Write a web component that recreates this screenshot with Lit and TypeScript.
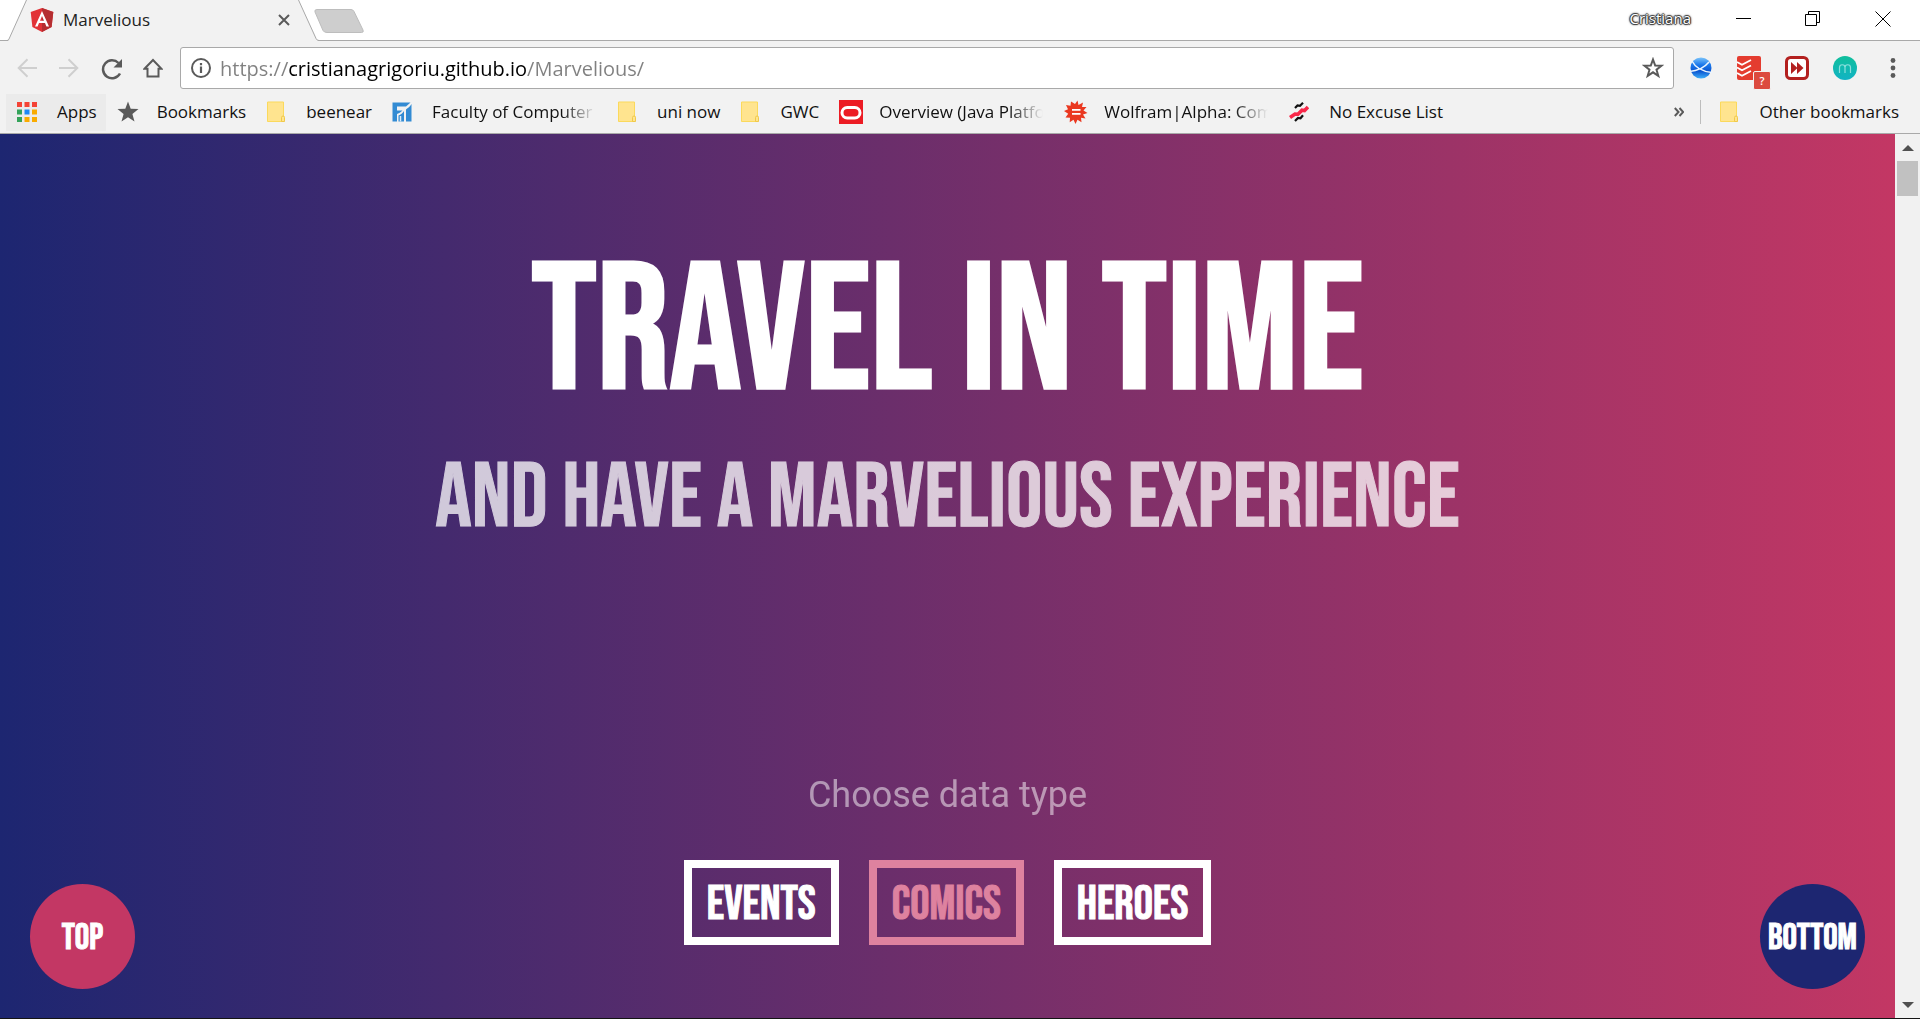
import { LitElement, html, css, svg, nothing } from "lit";
import { customElement, property, state } from "lit/decorators.js";
import { classMap } from "lit/directives/class-map.js";

const folder = svg`<svg viewBox="0 0 20 24" width="20" height="24" aria-hidden="true">
  <path d="M1.500 2h16v14.500h.5v5H1.500z" fill="#ffe48f" stroke="#fbd95c"/>
  <path d="M15.500 21.500v-4a1.500 1.500 0 0 1 3 0v4z" fill="#ffe48f" stroke="#f0c94a"/></svg>`;

const icons: Record<string, unknown> = {
  folder,
  apps: svg`<svg viewBox="0 0 20 20" width="20" height="20" aria-hidden="true">
    <path d="M0 0h5v5H0zM7.500 0h5v5h-5zM15 0h5v5h-5z" fill="#f44336"/>
    <path d="M0 7.500h5v5H0zM0 15h5v5H0z" fill="#34a35a"/>
    <path d="M7.500 7.500h5v5h-5z" fill="#1e88f5"/>
    <path d="M15 7.500h5v5h-5zM15 15h5v5h-5zM7.500 15h5v5h-5z" fill="#f9ab00"/></svg>`,
  star: svg`<svg viewBox="0 0 22 22" width="22" height="22" aria-hidden="true">
    <path d="M11 .5l2.700 7.200 7.800.3-6.100 4.900 2.100 7.600L11 16.200l-6.500 4.300 2.100-7.600L.5 8l7.800-.3z" fill="#5a5a5a"/></svg>`,
  faculty: svg`<svg viewBox="0 0 20 20" width="20" height="20" aria-hidden="true">
    <path d="M.5.5h18L14 4.500H5v4h5.500C9 10 7.500 11 5 12v7.500H.5z" fill="#338bd3"/>
    <path d="M12 9v10.500H6.500V13.500C9 12.500 10.500 11 12 9z" fill="#338bd3"/>
    <path d="M19.500 2v17.500H14V7.500C16 6 18 4.500 19.500 2z" fill="#338bd3"/>
    <path d="M8.500 14v5.500" stroke="#d9ecfb" stroke-width="1.500"/></svg>`,
  oracle: svg`<svg viewBox="0 0 24 24" width="24" height="24" aria-hidden="true">
    <path d="M0 0h24v24H0z" fill="#ec1c24"/>
    <rect x="3" y="7.500" width="18" height="10.500" rx="5.250" fill="none" stroke="#fff" stroke-width="3"/></svg>`,
  wolfram: svg`<svg viewBox="0 0 24 24" width="24" height="24" aria-hidden="true">
    <path d="M11 4L13.500 .5l1 4.500 4.500-2.500-1 4.500 4.500 0-3 3.500 4 2.500-4.500 1.500 2.500 4-4.500-.8.500 4.500-4-2.500-2 4.300-2-4.200-3.800 2.500.300-4.500-4.500-.3 2.700-3.700L0 11l4-1.700L2 5l4.500.8L7 1.500z" fill="#ea3820"/>
    <path d="M8 9.800h8.500M8 13.800h8.500" stroke="#fff" stroke-width="1.800"/></svg>`,
  excuse: svg`<svg viewBox="0 0 20 22" width="20" height="22" aria-hidden="true">
    <path d="M6 7l2.500-2.500 2.500.3 3-3" fill="none" stroke="#111" stroke-width="2.200"/>
    <path d="M1 16.500l5-3.500 3 .2 4-4 2.500.3 3.500-3.500" fill="none" stroke="#f9284a" stroke-width="3.600"/>
    <path d="M6 20l3-3 2.500.3 2.500-3" fill="none" stroke="#111" stroke-width="2.200"/></svg>`,
};

interface Bookmark {
  icon: string;
  label: string;
  cut?: boolean;
  hot?: boolean;
}

const bookmarks: Bookmark[] = [
  { icon: "apps", label: "Apps", hot: true },
  { icon: "star", label: "Bookmarks" },
  { icon: "folder", label: "beenear" },
  { icon: "faculty", label: "Faculty of Computer", cut: true },
  { icon: "folder", label: "uni now" },
  { icon: "folder", label: "GWC" },
  { icon: "oracle", label: "Overview (Java Platfo", cut: true },
  { icon: "wolfram", label: "Wolfram|Alpha: Com", cut: true },
  { icon: "excuse", label: "No Excuse List" },
];

@customElement("tab-strip")
export class TabStrip extends LitElement {
  static styles = css`
    :host { display: flex; height: 41px; background: #fff; box-shadow: inset 0 -1px #a9a9a9; font-size: 17px; color: #222; }
    button { border: 0; padding: 0; background: none; font: inherit; color: inherit; display: grid; place-items: center; }
    svg { display: block; }
    .tab { position: relative; width: 313px; box-sizing: border-box; padding: 0 23px 2px 30px; display: flex; align-items: center; gap: 9px; }
    .shape { position: absolute; left: 0; top: 0; }
    .tab > :not(.shape) { position: relative; }
    .title { flex: 1; }
    .new { align-self: flex-start; margin-top: 8px; }
    .user { margin-left: auto; align-self: center; padding-bottom: 6px; font-size: 15px; color: #fff; text-shadow: 0 0 1px #333, 1px 0 1px #333, -1px 0 1px #333, 0 1px 1px #333, 0 -1px 1px #333, 0 0 3px #555; }
    .win { width: 70px; height: 37px; }
    .caption { display: flex; margin: 0 2px 0 17px; }
  `;
  render() {
    return html`
      <div class="tab">
        <svg class="shape" viewBox="0 0 325 41" width="325" height="41" aria-hidden="true">
          <path d="M8 41L26.500 0h272L318 41z" fill="#f2f2f2"/>
          <path d="M0 40.500h7q1.500 0 2-1.500L26.500 0M298.500 0L316 38.500q1 2 3 2h6" fill="none" stroke="#a9a9a9"/>
        </svg>
        <svg viewBox="0 0 24 24" width="24" height="24" aria-hidden="true">
          <path d="M12 0l11.300 4-1.700 15L12 24l-9.600-5L.7 4z" fill="#e23237"/>
          <path d="M12 0l11.300 4-1.700 15L12 24z" fill="#b52e31"/>
          <path d="M12 3L5 18.500h2.600L9 15h6l1.400 3.500H19zm0 5l2 4.800h-4z" fill="#fff"/>
        </svg>
        <span class="title">Marvelious</span>
        <button class="close" aria-label="Close tab">
          <svg viewBox="0 0 12 12" width="12" height="12"><path d="M1 1l10 10M11 1L1 11" stroke="#5a5a5a" stroke-width="2"/></svg>
        </button>
      </div>
      <button class="new" aria-label="New tab">
        <svg viewBox="0 0 52 26" width="52" height="26"><path d="M4 1.500h34q2 0 3 2l9 18.500q1 2.500-1.500 2.500H14q-3 0-4-2L2 4q-.8-2.500 2-2.500z" fill="#cecece" stroke="#bdbdbd"/></svg>
      </button>
      <span class="user">Cristiana</span>
      <div class="caption">
        <button class="win" aria-label="Minimise"><svg viewBox="0 0 15 15" width="15" height="15"><path d="M0 7.500h15" stroke="#000"/></svg></button>
        <button class="win" aria-label="Restore"><svg viewBox="0 0 16 16" width="16" height="16"><path d="M.5 3.500h11v11H.5zM3.500 3.500v-3h11v11h-3" fill="none" stroke="#000"/></svg></button>
        <button class="win" aria-label="Close"><svg viewBox="0 0 16 16" width="16" height="16"><path d="M.5.5l15 15M15.500.5l-15 15" stroke="#000"/></svg></button>
      </div>
    `;
  }
}

@customElement("tool-bar")
export class ToolBar extends LitElement {
  static styles = css`
    :host { display: flex; align-items: center; padding: 6px 16px 2px 17px; }
    button { border: 0; padding: 0; background: none; font: inherit; display: grid; place-items: center; }
    svg { display: block; }
    .nav { display: flex; gap: 22px; }
    .nav button { width: 20px; height: 20px; }
    .address { flex: 1; display: flex; align-items: center; margin-left: 17px; height: 40px; border: 1px solid #a9a9a9; border-radius: 3px; background: #fff; padding: 0 9px 0 10px; }
    .url {
      flex: 1; min-width: 0; border: 0; outline: 0; padding: 0; margin: 0 9px; height: 36px;
      font: inherit; font-size: 20px; color: transparent;
      background: linear-gradient(90deg, #808080 68px, #000 68px, #000 306px, #808080 306px);
      -webkit-background-clip: text; background-clip: text;
    }
    .ext { display: flex; align-items: center; gap: 24px; margin-left: 15px; }
    .ext button { width: 24px; height: 24px; }
    .ext svg { overflow: visible; }
    .menu { margin-left: 31px; width: 10px; height: 24px; margin-right: 6px; }
    text { font-family: "Open Sans", sans-serif; text-anchor: middle; }
  `;
  render() {
    return html`
      <div class="nav">
        <button aria-label="Back"><svg viewBox="0 0 20 20" width="20" height="20"><path d="M20 10H2M10.500 1.200L1.700 10l8.800 8.800" fill="none" stroke="#cfcfcf" stroke-width="2"/></svg></button>
        <button aria-label="Forward"><svg viewBox="0 0 20 20" width="20" height="20"><path d="M0 10h18M9.500 1.200l8.800 8.800-8.800 8.800" fill="none" stroke="#cfcfcf" stroke-width="2"/></svg></button>
        <button aria-label="Reload"><svg viewBox="0 0 22 22" width="22" height="22"><path d="M19 15.500A9 9 0 1 1 17.500 5" fill="none" stroke="#5a5a5a" stroke-width="2.500"/><path d="M21 1v8.500h-8.500z" fill="#5a5a5a"/></svg></button>
        <button aria-label="Home"><svg viewBox="0 0 20 20" width="20" height="20"><path d="M1.500 10.800L10 2l8.500 8.800H15.500v7.700h-11v-7.700z" fill="none" stroke="#5a5a5a" stroke-width="2"/></svg></button>
      </div>
      <div class="address">
        <button aria-label="Site information"><svg viewBox="0 0 20 20" width="20" height="20"><circle cx="10" cy="10" r="9" fill="none" stroke="#5a5a5a" stroke-width="2"/><path d="M10 8.500v6.500M10 5v2.200" stroke="#5a5a5a" stroke-width="2.200"/></svg></button>
        <input class="url" type="text" aria-label="Address" spellcheck="false" .value=${"https://cristianagrigoriu.github.io/Marvelious/"}>
        <button aria-label="Bookmark this page"><svg viewBox="0 0 22 22" width="22" height="22"><path d="M11 2.500l2.200 6 6.300.2-5 4 1.800 6.100L11 15.300l-5.300 3.500 1.800-6.100-5-4 6.300-.2z" fill="none" stroke="#5a5a5a" stroke-width="2"/></svg></button>
      </div>
      <div class="ext">
        <button aria-label="Globe extension"><svg viewBox="0 0 24 24" width="24" height="24">
          <defs><linearGradient id="globe" x2="0" y2="1"><stop offset="0" stop-color="#7cc4fa"/><stop offset=".35" stop-color="#1a78ec"/><stop offset=".65" stop-color="#0a55d0"/><stop offset="1" stop-color="#3fb0fa"/></linearGradient></defs>
          <circle cx="12" cy="12" r="10.500" fill="url(#globe)"/>
          <path d="M3 5c3 6 10 10.500 20 11.500M.5 15.500c8-.5 15-4 19.500-9.500" fill="none" stroke="#eaf5ff" stroke-width="1.500"/></svg></button>
        <button aria-label="Tasks extension"><svg viewBox="0 0 24 24" width="24" height="24">
          <rect width="24" height="24" rx="2" fill="#e43c2f"/>
          <path d="M0 6l5 2.800L14 4M0 11.500l5 2.800 9-4.800M0 17l5 2.800 9-4.800" fill="none" stroke="#fff" stroke-width="1.800"/>
          <rect x="16.500" y="15.500" width="17" height="18" rx="1.500" fill="#dc4a3f" stroke="#f2f2f2"/>
          <text x="25" y="29" font-size="11" font-weight="600" fill="#fff">?</text></svg></button>
        <button aria-label="Playback extension"><svg viewBox="0 0 24 24" width="24" height="24">
          <rect x="1.500" y="1.500" width="21" height="21" rx="4" fill="#fff" stroke="#b3201f" stroke-width="3"/>
          <path d="M6 6l6.500 6L6 18zM12 6l6.500 6L12 18z" fill="#b3201f"/></svg></button>
        <button aria-label="Profile extension"><svg viewBox="0 0 24 24" width="24" height="24">
          <defs><linearGradient id="mint" x2="0" y2="1"><stop offset="0" stop-color="#10bf9c"/><stop offset="1" stop-color="#12b3c4"/></linearGradient></defs>
          <circle cx="12" cy="12" r="12" fill="url(#mint)"/>
          <path d="M6.500 17v-5.500a2.750 2.750 0 0 1 5.500 0V17M12 11.500a2.750 2.750 0 0 1 5.500 0V17" fill="none" stroke="#8be0dc" stroke-width="1.200"/></svg></button>
      </div>
      <button class="menu" aria-label="Menu"><svg viewBox="0 0 6 22" width="6" height="22"><circle cx="3" cy="3.500" r="2.400" fill="#5a5a5a"/><circle cx="3" cy="11" r="2.400" fill="#5a5a5a"/><circle cx="3" cy="18.500" r="2.400" fill="#5a5a5a"/></svg></button>
    `;
  }
}

@customElement("bookmark-bar")
export class BookmarkBar extends LitElement {
  static styles = css`
    :host { display: flex; align-items: center; height: 42px; padding: 0 12px 0 6px; border-bottom: 1px solid #a9a9a9; font-size: 17px; color: #111; }
    a { display: flex; align-items: center; gap: 20px; height: 37px; padding: 0 9px 0 11px; color: inherit; text-decoration: none; white-space: nowrap; }
    .hot { background: #ebebeb; }
    .icon { width: 20px; display: grid; place-items: center; }
    .icon svg { display: block; }
    .label { padding-bottom: 2px; }
    .cut { width: 165px; -webkit-mask-image: linear-gradient(90deg, #000 130px, transparent 164px); mask-image: linear-gradient(90deg, #000 130px, transparent 164px); }
    button { margin: 0 16px 0 auto; border: 0; padding: 0; background: none; }
    .rule { width: 1px; height: 24px; background: #bdbdbd; margin-right: 7px; }
  `;
  private item(b: Bookmark) {
    return html`<a href="#" class=${b.hot ? "hot" : nothing}>
      <span class="icon">${icons[b.icon]}</span><span class=${classMap({ label: true, cut: !!b.cut })}>${b.label}</span></a>`;
  }
  render() {
    return html`
      ${bookmarks.map((b) => this.item(b))}
      <button aria-label="More bookmarks"><svg viewBox="0 0 10 10" width="10" height="10"><path d="M.8 1l3.700 4L.8 9M5.500 1l3.700 4-3.700 4" fill="none" stroke="#5a5a5a" stroke-width="2"/></svg></button>
      <span class="rule"></span>
      ${this.item({ icon: "folder", label: "Other bookmarks" })}
    `;
  }
}

@customElement("time-travel")
export class TimeTravel extends LitElement {
  static styles = css`
    :host { position: relative; display: flex; flex-direction: column; align-items: center; background: linear-gradient(90deg, #1d2671, #c33764); color: #fff; overflow: hidden; }
    h1, h2, p { margin: 0; white-space: nowrap; }
    h1, h2, button { font-family: "Bebas Neue", "Liberation Sans Narrow", "Roboto Condensed", "Liberation Sans", sans-serif; font-weight: 400; text-transform: uppercase; -webkit-text-stroke: 1px currentColor; }
    h1 { margin-top: 120px; font-size: 180px; line-height: 160px; -webkit-text-stroke-width: 3px; }
    h2 { margin-top: 45px; font-size: 91px; line-height: 80px; opacity: 0.75; }
    p { margin-top: 236px; font-family: Roboto, sans-serif; font-size: 36px; line-height: 40px; opacity: 0.5; }
    .types { display: flex; gap: 30px; margin-top: 45px; }
    .type { height: 85px; padding: 4px 15px 0; border: 8px solid #fff; background: none; color: #fff; font-size: 48px; }
    .picked { color: #de829f; border-color: #de829f; }
    .jump { position: absolute; bottom: 29px; width: 105px; height: 105px; border: 0; border-radius: 50%; padding: 4px 0 0; color: #fff; font-size: 36px; }
    .top { left: 30px; background: #c33764; }
    .bottom { right: 30px; background: #1d2671; }
  `;
  @property({ type: Array }) types = ["Events", "Comics", "Heroes"];
  @state() private picked = "Comics";
  render() {
    return html`
      <h1>Travel in time</h1>
      <h2>and have a marvelious experience</h2>
      <p>Choose data type</p>
      <div class="types">
        ${this.types.map((t) => html`<button class=${classMap({ type: true, picked: t === this.picked })} @click=${() => (this.picked = t)}>${t}</button>`)}
      </div>
      <button class="jump top">Top</button>
      <button class="jump bottom">Bottom</button>
    `;
  }
}

@customElement("app-root")
export class AppRoot extends LitElement {
  static styles = css`
    :host { display: flex; flex-direction: column; height: 100vh; background: #f2f2f2; font-family: "Segoe UI", "Open Sans", sans-serif; overflow: hidden; }
    .view { flex: 1; min-height: 0; display: flex; border-bottom: 1px solid #141414; }
    .page { flex: 1; min-width: 0; }
    .bar { width: 25px; background: #f1f1f1; display: flex; flex-direction: column; align-items: center; }
    .arrow { height: 27px; display: grid; place-items: center; }
    .thumb { width: 21px; height: 35px; background: #c1c1c1; margin-bottom: auto; }
  `;
  render() {
    return html`
      <tab-strip></tab-strip>
      <tool-bar></tool-bar>
      <bookmark-bar></bookmark-bar>
      <div class="view">
        <time-travel class="page"></time-travel>
        <div class="bar" aria-hidden="true">
          <span class="arrow"><svg viewBox="0 0 12 6" width="12" height="6"><path d="M0 6l6-6 6 6z" fill="#505050"/></svg></span>
          <span class="thumb"></span>
          <span class="arrow"><svg viewBox="0 0 12 6" width="12" height="6"><path d="M0 0l6 6 6-6z" fill="#505050"/></svg></span>
        </div>
      </div>
    `;
  }
}
